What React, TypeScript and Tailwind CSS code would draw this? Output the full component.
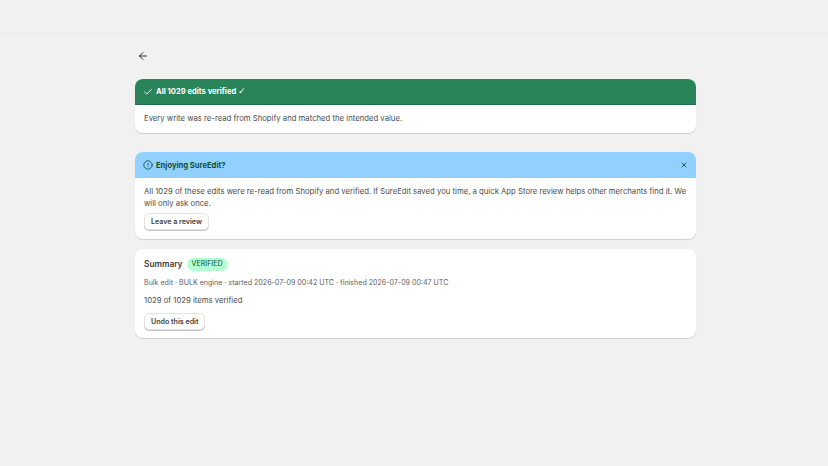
import { ArrowLeft, Check, CircleAlert, X } from "lucide-react";

const font = "font-['Inter',sans-serif]";

function Btn({ children }: { children: string }) {
  return (
    <button className="h-[17px] px-[6px] rounded-[5px] bg-white border border-[#e3e3e3] shadow-[0_1px_0_#c4c4c4] text-[7.1px] font-semibold text-[#404040] leading-none">
      {children}
    </button>
  );
}

export default function App() {
  return (
    <div className={`min-h-[466px] bg-[#f1f1f1] ${font} text-[#303030]`}>
      <div className="h-[34px] border-b border-[#ebebeb]" />
      <main className="w-[561px] ml-[135px] flex flex-col">
        <div className="h-[45px] flex items-center pl-[2px] pb-[1px]">
          <ArrowLeft size={12} strokeWidth={2} className="text-[#303030]" />
        </div>

        <section className="rounded-[8px] overflow-hidden bg-white shadow-[0_1px_1px_#cfcfcf]">
          <div className="h-[26px] bg-[#29845a] border-b border-[#1f6f4b] flex items-center gap-[3px] px-[8px] text-white">
            <Check size={10} strokeWidth={2.2} />
            <h2 className="text-[7.6px] font-bold pt-[1px]">
              All 1029 edits verified <span className="font-['DejaVu_Sans',sans-serif] font-normal text-[9px] leading-none">✓</span>
            </h2>
          </div>
          <p className="h-[28px] px-[9px] flex items-center text-[7.72px] text-[#4a4a4a]">
            Every write was re-read from Shopify and matched the intended value.
          </p>
        </section>

        <section className="mt-[19px] rounded-[8px] overflow-hidden bg-white shadow-[0_1px_1px_#cfcfcf]">
          <div className="h-[26px] bg-[#91d0ff] flex items-center gap-[3px] px-[8px] text-[#0c5132]">
            <CircleAlert size={10} strokeWidth={2} />
            <h2 className="text-[7.6px] font-bold flex-1 pt-[1px]">Enjoying SureEdit?</h2>
            <X size={8} strokeWidth={2.6} />
          </div>
          <div className="px-[9px] pt-[8px] pb-[9px]">
            <p className="text-[7.72px] leading-[12px] text-[#4a4a4a]">
              All 1029 of these edits were re-read from Shopify and verified. If SureEdit saved you time, a quick App Store review helps other merchants find it. We will only ask once.
            </p>
            <div className="mt-[3px] flex">
              <Btn>Leave a review</Btn>
            </div>
          </div>
        </section>

        <section className="mt-[10px] rounded-[8px] bg-white shadow-[0_1px_1px_#cfcfcf] px-[9px] pt-[9px] pb-[8px]">
          <div className="flex items-center gap-[4px]">
            <h2 className="text-[8.3px] font-semibold text-[#404040]">Summary</h2>
            <span className="h-[13px] px-[5px] rounded-full bg-[#b4fed2] text-[#0c5132] text-[7.1px] flex items-center">VERIFIED</span>
          </div>
          <p className="mt-[7px] text-[7.1px] text-[#616161]">
            Bulk edit · BULK engine · started 2026-07-09 00:42 UTC · finished 2026-07-09 00:47 UTC
          </p>
          <p className="mt-[6px] text-[7.72px] text-[#4a4a4a]">1029 of 1029 items verified</p>
          <div className="mt-[7px] flex">
            <Btn>Undo this edit</Btn>
          </div>
        </section>
      </main>
    </div>
  );
}
